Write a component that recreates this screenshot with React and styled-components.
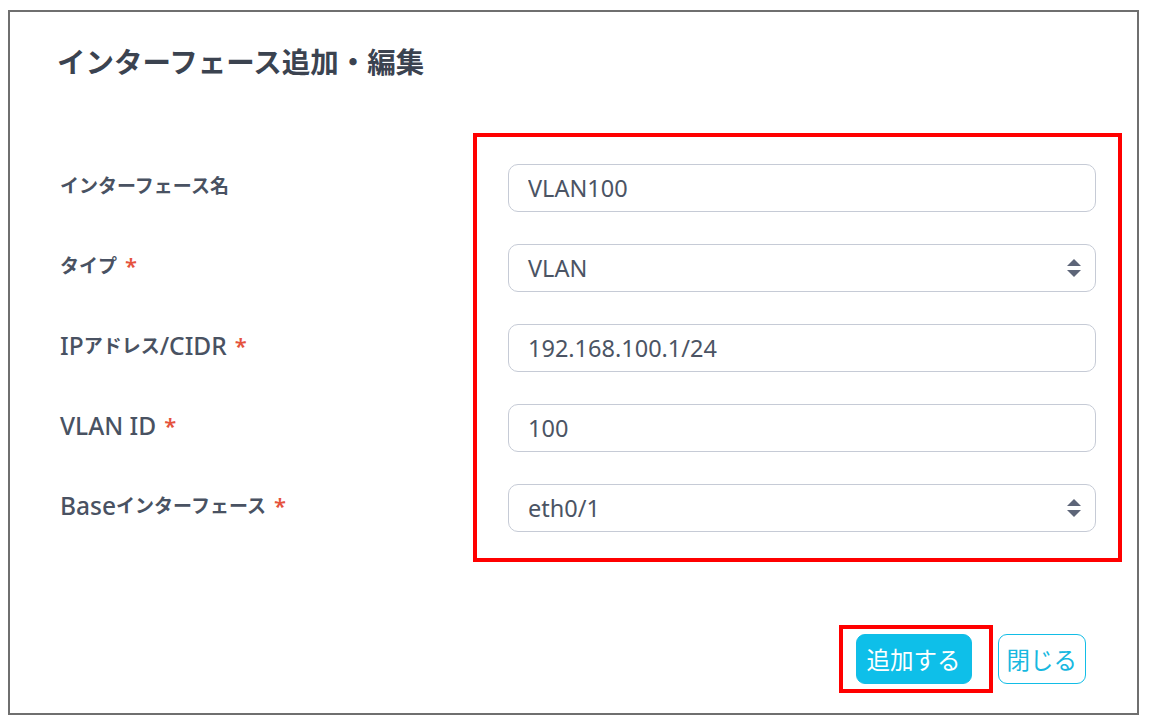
import React from "react";
import styled, { createGlobalStyle } from "styled-components";

const GlobalStyle = createGlobalStyle`
    * {
        box-sizing: border-box;
    }
    body {
        margin: 0;
        background: #fff;
        font-family: "Noto Sans", "Noto Sans CJK JP", sans-serif;
    }
`;

const Page = styled.div`
    width: 1152px;
    height: 725px;
    padding: 10px 13px 10px 8px;
`;

const Frame = styled.div`
    height: 705px;
    border: 2px solid #6f6f6f;
    padding: 30px 15px 20px 47px;
    display: flex;
    flex-direction: column;
`;

const Title = styled.h1`
    margin: 0;
    font-size: 28.5px;
    line-height: 40px;
    font-weight: 600;
    color: #3b4350;
`;

const FormBody = styled.div`
    margin-top: 51px;
    display: grid;
    grid-template-columns: 1fr 649px;
`;

const LabelColumn = styled.div`
    padding-top: 28px;
    padding-left: 3px;
    display: flex;
    flex-direction: column;
    gap: 32px;
`;

const Label = styled.div`
    height: 48px;
    display: flex;
    align-items: center;
    font-size: 19px;
    font-weight: 600;
    color: #495262;
    .latin {
        font-size: 24.5px;
        font-weight: 500;
    }
    .req {
        color: #e5533d;
        font-size: 22px;
        margin-left: 8px;
    }
`;

const Highlight = styled.div`
    border: 4px solid #ff0000;
    padding: 27px 22px 26px 31px;
    display: flex;
    flex-direction: column;
    gap: 32px;
`;

const Field = styled.input`
    width: 100%;
    height: 48px;
    border: 1.5px solid #c6cbd6;
    border-radius: 10px;
    padding: 0 19px;
    font-family: "Noto Sans", "Noto Sans CJK JP", sans-serif;
    font-size: 23.5px;
    color: #4b5464;
    background: #fff;
    outline: none;
`;

const SelectBox = styled.div`
    width: 100%;
    height: 48px;
    border: 1.5px solid #c6cbd6;
    border-radius: 10px;
    padding: 0 13px 0 19px;
    display: flex;
    align-items: center;
    justify-content: space-between;
    font-size: 23.5px;
    color: #4b5464;
`;

const Footer = styled.div`
    margin-top: auto;
    display: flex;
    justify-content: flex-end;
    align-items: center;
    gap: 5px;
    padding-right: 36px;
`;

const Mark = styled.div`
    border: 4px solid #ff0000;
    padding: 5px 17px 5px 13px;
`;

const Button = styled.button`
    height: 50px;
    padding: 0 ${(p) => (p.primary ? "10px" : "8px")};
    border-radius: 9px;
    font-family: "Noto Sans", "Noto Sans CJK JP", sans-serif;
    font-size: 23.5px;
    cursor: pointer;
    border: 1.5px solid #12bde6;
    background: ${(p) => (p.primary ? "#0ebfe9" : "#fff")};
    color: ${(p) => (p.primary ? "#fff" : "#17b8e0")};
`;

const Arrows = () => (
    <svg width="16" height="20" viewBox="0 0 16 20">
        <path d="M8 1 L15 8 L1 8 Z" fill="#5d6578" />
        <path d="M1 12 L15 12 L8 19 Z" fill="#5d6578" />
    </svg>
);

const labels = [
    { parts: [["ja", "インターフェース名"]], req: false },
    { parts: [["ja", "タイプ"]], req: true },
    { parts: [["en", "IP"], ["ja", "アドレス"], ["en", "/CIDR"]], req: true },
    { parts: [["en", "VLAN ID"]], req: true },
    { parts: [["en", "Base"], ["ja", "インターフェース"]], req: true },
];

const App = () => {
    return (
        <Page>
            <GlobalStyle />
            <Frame>
                <Title>インターフェース追加・編集</Title>
                <FormBody>
                    <LabelColumn>
                        {labels.map((l, i) => (
                            <Label key={i}>
                                {l.parts.map(([lang, text]) => (
                                    <span key={text} className={lang === "en" ? "latin" : ""}>
                                        {text}
                                    </span>
                                ))}
                                {l.req && <span className="req">*</span>}
                            </Label>
                        ))}
                    </LabelColumn>
                    <Highlight>
                        <Field readOnly value="VLAN100" />
                        <SelectBox>
                            <span>VLAN</span>
                            <Arrows />
                        </SelectBox>
                        <Field readOnly value="192.168.100.1/24" />
                        <Field readOnly value="100" />
                        <SelectBox>
                            <span>eth0/1</span>
                            <Arrows />
                        </SelectBox>
                    </Highlight>
                </FormBody>
                <Footer>
                    <Mark>
                        <Button primary>追加する</Button>
                    </Mark>
                    <Button>閉じる</Button>
                </Footer>
            </Frame>
        </Page>
    );
};

export default App;
